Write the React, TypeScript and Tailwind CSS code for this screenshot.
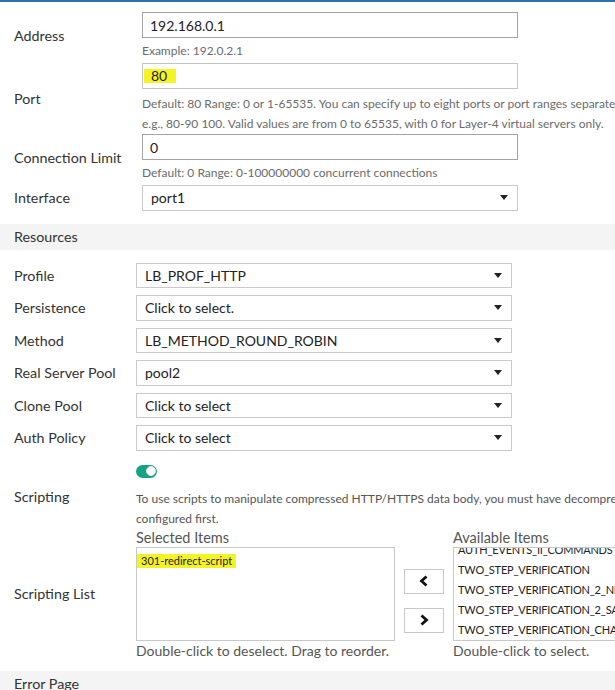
// Virtual server edit form: general fields, resources, scripting list.

const font = "font-['Lato','Open_Sans',sans-serif]";

function Label({ children, w = 'w-[136px]' }: { children: React.ReactNode; w?: string }) {
  return <div className={`${w} shrink-0 pl-[14px] text-[14.3px] text-[#333]`}>{children}</div>;
}

function TextInput({ value }: { value: string }) {
  return (
    <div className="flex h-[26px] w-[376px] items-center border border-[#a4a4a4] bg-white px-[7px] text-[14px] text-[#222]">
      {value}
    </div>
  );
}

function Select({ value }: { value: string }) {
  return (
    <div className="flex h-[25.5px] w-[376px] items-center justify-between border border-[#cacaca] bg-white pl-[8px] pr-[9px] text-[14px] text-[#222]">
      <span>{value}</span>
      <span className="h-0 w-0 border-x-[4.5px] border-t-[5px] border-x-transparent border-t-[#222]" />
    </div>
  );
}

function Help({ children, className = '' }: { children: React.ReactNode; className?: string }) {
  return <p className={`whitespace-nowrap text-[12px] text-[#6b6b6b] ${className}`}>{children}</p>;
}

function Band({ title }: { title: string }) {
  return (
    <div className="flex h-[26px] items-center bg-[#f4f4f4] pl-[14px] text-[14.3px] text-[#333]">{title}</div>
  );
}

function Chevron({ dir }: { dir: 'left' | 'right' }) {
  return (
    <svg width="10" height="12" viewBox="0 0 10 12" fill="none">
      <polyline
        points={dir === 'left' ? '7.5,1.5 2.5,6 7.5,10.5' : '2.5,1.5 7.5,6 2.5,10.5'}
        stroke="#111"
        strokeWidth="2.8"
        strokeLinejoin="miter"
      />
    </svg>
  );
}

const available = [
  'AUTH_EVENTS_II_COMMANDS',
  'TWO_STEP_VERIFICATION',
  'TWO_STEP_VERIFICATION_2_NETWORK',
  'TWO_STEP_VERIFICATION_2_SAML',
  'TWO_STEP_VERIFICATION_CHANGE',
];

export default function App() {
  return (
    <div className={`${font} h-[690px] w-[615px] overflow-hidden border-t-2 border-[#2c6fb2] bg-white`}>
      {/* general */}
      <div className="flex items-center pt-[10px]">
        <Label w="w-[142px]">Address</Label>
        <div>
          <TextInput value="192.168.0.1" />
          <Help className="pt-[4px] leading-[18px]">Example: 192.0.2.1</Help>
        </div>
      </div>

      <div className="mt-[3px] flex items-center">
        <Label w="w-[142px]">Port</Label>
        <div>
          <div className="flex h-[26px] w-[376px] items-center border border-[#c4c4c4] bg-white text-[14px] text-[#222]">
            <span className="ml-[1px] bg-[#f4f424] pl-[7px] pr-[9px] leading-[14px]">80</span>
          </div>
          <div className="mt-[5px] leading-[20px]">
            <Help>
              Default: 80 Range: 0 or 1-65535. You can specify up to eight ports or port ranges separated by spaces,
            </Help>
            <Help>e.g., 80-90 100. Valid values are from 0 to 65535, with 0 for Layer-4 virtual servers only.</Help>
          </div>
        </div>
      </div>

      <div className="flex items-center">
        <Label w="w-[142px]">Connection Limit</Label>
        <div>
          <TextInput value="0" />
          <Help className="mt-[4px] leading-[18px]">Default: 0 Range: 0-100000000 concurrent connections</Help>
        </div>
      </div>

      <div className="mt-[3px] flex items-center">
        <Label w="w-[142px]">Interface</Label>
        <Select value="port1" />
      </div>

      <div className="mt-[13px]">
        <Band title="Resources" />
      </div>

      {/* resources */}
      <div className="mt-[13px] flex flex-col gap-[7px]">
        {[
          ['Profile', 'LB_PROF_HTTP'],
          ['Persistence', 'Click to select.'],
          ['Method', 'LB_METHOD_ROUND_ROBIN'],
          ['Real Server Pool', 'pool2'],
          ['Clone Pool', 'Click to select'],
          ['Auth Policy', 'Click to select'],
        ].map(([label, value]) => (
          <div key={label} className="flex items-center">
            <Label>{label}</Label>
            <Select value={value} />
          </div>
        ))}
      </div>

      {/* scripting */}
      <div className="mt-[14px] flex items-center">
        <Label>Scripting</Label>
        <div>
          <div className="flex h-[13px] w-[21px] items-center justify-end rounded-full bg-[#16a383] pr-[1.5px]">
            <span className="h-[10px] w-[10px] rounded-full border border-[#e6e6e6] bg-white" />
          </div>
          <div className="mt-[11px] leading-[20px]">
            <Help className="text-[#555]">
              To use scripts to manipulate compressed HTTP/HTTPS data body, you must have decompression
            </Help>
            <Help className="text-[#555]">configured first.</Help>
          </div>
        </div>
      </div>

      <div className="flex items-center">
        <Label>Scripting List</Label>
        <div className="flex">
          <div>
            <div className="whitespace-nowrap text-[14.5px] leading-[18px] text-[#555]">Selected Items</div>
            <div className="h-[94px] w-[259px] border border-[#c8c8c8] bg-white pt-[4px] leading-[14px]">
              <span className="inline-block bg-[#f4f424] px-[4px] text-[11px] leading-[14px] text-[#222]">
                301-redirect-script
              </span>
            </div>
            <div className="whitespace-nowrap pt-[1px] text-[14px] leading-[18px] text-[#555]">
              Double-click to deselect. Drag to reorder.
            </div>
          </div>

          <div className="ml-[9px] mt-[40px] flex flex-col gap-[14px]">
            <button className="flex h-[25px] w-[40px] items-center justify-center border border-[#c8c8c8] bg-white">
              <Chevron dir="left" />
            </button>
            <button className="flex h-[25px] w-[40px] items-center justify-center border border-[#c8c8c8] bg-white">
              <Chevron dir="right" />
            </button>
          </div>

          <div className="ml-[9px]">
            <div className="whitespace-nowrap text-[14.5px] leading-[18px] text-[#555]">Available Items</div>
            <div className="relative h-[94px] w-[200px] overflow-hidden border border-[#c8c8c8] bg-white pl-[4px]">
              <div className="-mt-[8px] flex flex-col">
                {available.map((item) => (
                  <div key={item} className="whitespace-nowrap text-[11px] leading-[20px] tracking-[-0.2px] text-[#222]">
                    {item}
                  </div>
                ))}
              </div>
            </div>
            <div className="whitespace-nowrap pt-[1px] text-[14px] leading-[18px] text-[#555]">
              Double-click to select.
            </div>
          </div>
        </div>
      </div>

      <div className="mt-[11px]">
        <Band title="Error Page" />
      </div>
    </div>
  );
}
